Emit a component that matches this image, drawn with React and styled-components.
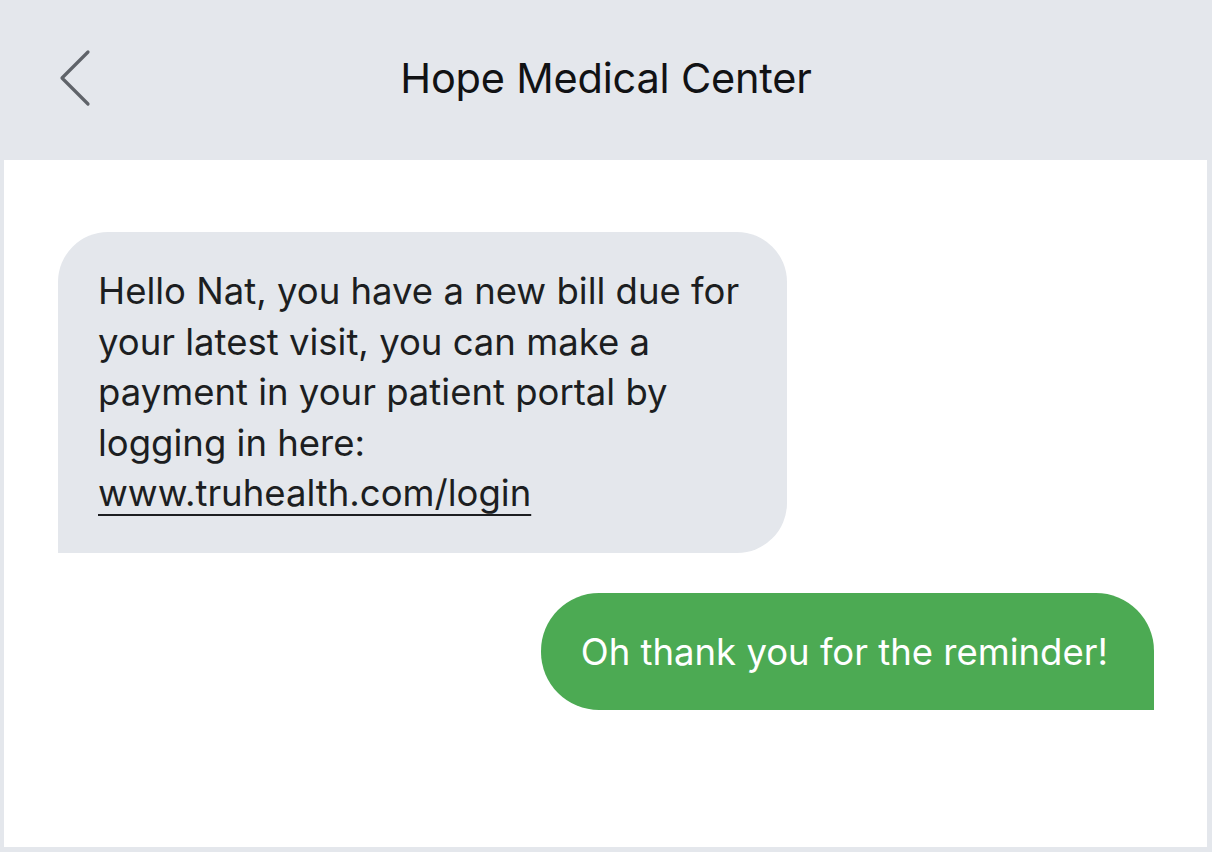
import styled, { createGlobalStyle } from "styled-components";

const GlobalStyle = createGlobalStyle`
  html, body {
    margin: 0;
    padding: 0;
    background: #e4e7ec;
  }
  body {
    font-family: Inter, "Noto Sans", sans-serif;
  }
`;

const Frame = styled.div`
  width: 1212px;
  height: 852px;
  background: #e4e7ec;
  display: flex;
  flex-direction: column;
  box-sizing: border-box;
  padding: 0 5px 5px 4px;
`;

const Header = styled.header`
  height: 160px;
  flex-shrink: 0;
  display: grid;
  grid-template-columns: 120px 1fr 120px;
  align-items: center;
  margin: 0 -5px 0 -4px;
`;

const BackButton = styled.button`
  border: none;
  background: none;
  padding: 0;
  margin-left: 58px;
  margin-top: -3px;
  width: 36px;
  height: 62px;
  display: flex;
  align-items: center;
  cursor: pointer;
`;

const Title = styled.h1`
  margin: 0;
  text-align: center;
  font-size: 41.5px;
  font-weight: 400;
  color: #111214;
  letter-spacing: -0.2px;
  margin-top: -4px;
`;

const Thread = styled.main`
  flex: 1;
  background: #fff;
  display: flex;
  flex-direction: column;
  gap: 40px;
  padding: 72px 53px 0 54px;
`;

const Bubble = styled.div`
  box-sizing: border-box;
  font-size: 36.5px;
  line-height: 50.5px;
  align-self: ${(p) => (p.$mine ? "flex-end" : "flex-start")};
  background: ${(p) => (p.$mine ? "#4caa53" : "#e4e7ec")};
  color: ${(p) => (p.$mine ? "#fff" : "#1c1e21")};
  border-radius: ${(p) => (p.$mine ? "58px 58px 0 58px" : "50px 50px 50px 0")};
  padding: ${(p) => (p.$mine ? "34px 46px 33px 40px" : "34px 48px 34px 40px")};
  white-space: nowrap;
`;

const Link = styled.a`
  color: inherit;
  text-decoration: underline;
  text-decoration-thickness: 2px;
  text-underline-offset: 8px;
`;

const ChevronLeft = () => (
  <svg width="36" height="62" viewBox="0 0 36 62" fill="none">
    <path
      d="M30 4 L4 30 L30 56"
      stroke="#5f6369"
      strokeWidth="3.2"
      strokeLinecap="round"
      strokeLinejoin="round"
    />
  </svg>
);

export default function App() {
  return (
    <>
      <GlobalStyle />
      <Frame>
        <Header>
          <BackButton aria-label="Back">
            <ChevronLeft />
          </BackButton>
          <Title>Hope Medical Center</Title>
          <span />
        </Header>
        <Thread>
          <Bubble>
            Hello Nat, you have a new bill due for
            <br />
            your latest visit, you can make a
            <br />
            payment in your patient portal by
            <br />
            logging in here:
            <br />
            <Link href="#">www.truhealth.com/login</Link>
          </Bubble>
          <Bubble $mine>Oh thank you for the reminder!</Bubble>
        </Thread>
      </Frame>
    </>
  );
}
